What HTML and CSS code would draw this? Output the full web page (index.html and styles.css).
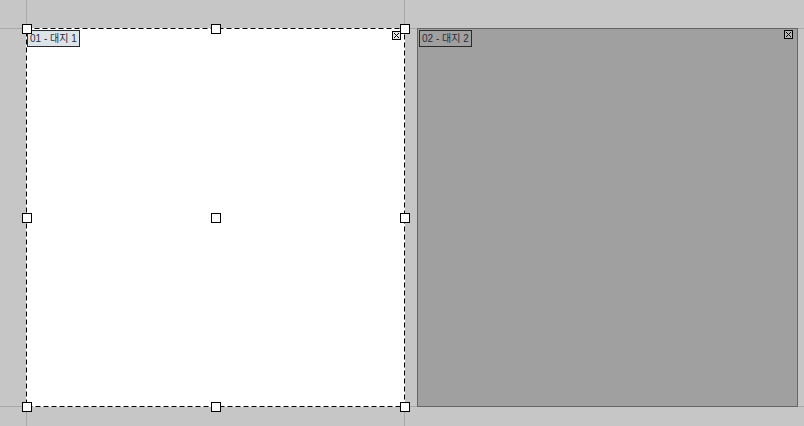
FILE: index.html
```html
<!DOCTYPE html>
<html lang="ko">
<head>
    <meta charset="UTF-8">
    <title>대지</title>
    <link rel="stylesheet" href="styles.css">
</head>
<body>
    <div class="stage">
        <!-- guides of the selected artboard -->
        <div class="guide guide-v" style="left: 26px;"></div>
        <div class="guide guide-v" style="left: 404px;"></div>
        <div class="guide guide-h" style="top: 28px;"></div>
        <div class="guide guide-h" style="top: 406px;"></div>

        <div class="canvas">
            <div class="artboard selected">
                <svg class="dash" width="379" height="379">
                    <rect x="0.5" y="0.5" width="378" height="378" fill="none" stroke="#000" stroke-width="1" stroke-dasharray="5 3"/>
                </svg>
                <div class="label">01 - 대지 1</div>
                <svg class="close" width="9" height="9" viewBox="0 0 9 9">
                    <rect x="0.5" y="0.5" width="8" height="8" fill="#e4e4e4" stroke="#000"/>
                    <path d="M2 2 L7 7 M7 2 L2 7" stroke="#000" stroke-width="1"/>
                </svg>

                <span class="handle h-tl"></span>
                <span class="handle h-tc"></span>
                <span class="handle h-tr"></span>
                <span class="handle h-ml"></span>
                <span class="handle h-mc"></span>
                <span class="handle h-mr"></span>
                <span class="handle h-bl"></span>
                <span class="handle h-bc"></span>
                <span class="handle h-br"></span>
            </div>

            <div class="artboard inactive">
                <div class="label">02 - 대지 2</div>
                <svg class="close" width="9" height="9" viewBox="0 0 9 9">
                    <rect x="0.5" y="0.5" width="8" height="8" fill="#b8b8b8" stroke="#000"/>
                    <path d="M2 2 L7 7 M7 2 L2 7" stroke="#000" stroke-width="1"/>
                </svg>
            </div>
        </div>
    </div>
</body>
</html>
```

FILE: styles.css
```css
body {
    margin: 0;
    background: #c6c6c6;
    font-family: "Liberation Sans", "Noto Sans CJK KR", sans-serif;
}

.stage {
    position: relative;
    width: 804px;
    height: 426px;
    overflow: hidden;
}

.guide {
    position: absolute;
    background: #a9a9a9;
}

.guide-v {
    top: 0;
    width: 1px;
    height: 100%;
}

.guide-h {
    left: 0;
    height: 1px;
    width: 100%;
}

.canvas {
    position: relative;
    display: flex;
    gap: 12px;
    padding: 28px 0 0 26px;
}

.artboard {
    position: relative;
    box-sizing: border-box;
    height: 379px;
}

.artboard.selected {
    width: 379px;
    background: #ffffff;
}

.artboard.inactive {
    width: 381px;
    background: #a0a0a0;
    border: 1px solid #666666;
}

.dash {
    position: absolute;
    left: 0;
    top: 0;
}

.label {
    position: absolute;
    top: 2px;
    left: 1px;
    height: 15px;
    padding: 0 2px;
    border: 1px solid #2a2a2a;
    font-size: 10px;
    line-height: 15px;
    color: #2b2b3a;
    white-space: nowrap;
}

.selected .label {
    background: #dce3e9;
}

.inactive .label {
    top: 1px;
    background: #a0a0a0;
}

.close {
    position: absolute;
    display: block;
}

.selected .close {
    left: 366px;
    top: 3px;
}

.inactive .close {
    left: 366px;
    top: 1px;
}

.handle {
    position: absolute;
    width: 10px;
    height: 10px;
    box-sizing: border-box;
    background: #ffffff;
    border: 1px solid #000;
}

.h-tl, .h-tc, .h-tr { top: -4px; }
.h-ml, .h-mc, .h-mr { top: 185px; }
.h-bl, .h-bc, .h-br { top: 374px; }
.h-tl, .h-ml, .h-bl { left: -4px; }
.h-tc, .h-mc, .h-bc { left: 185px; }
.h-tr, .h-mr, .h-br { left: 374px; }
```
